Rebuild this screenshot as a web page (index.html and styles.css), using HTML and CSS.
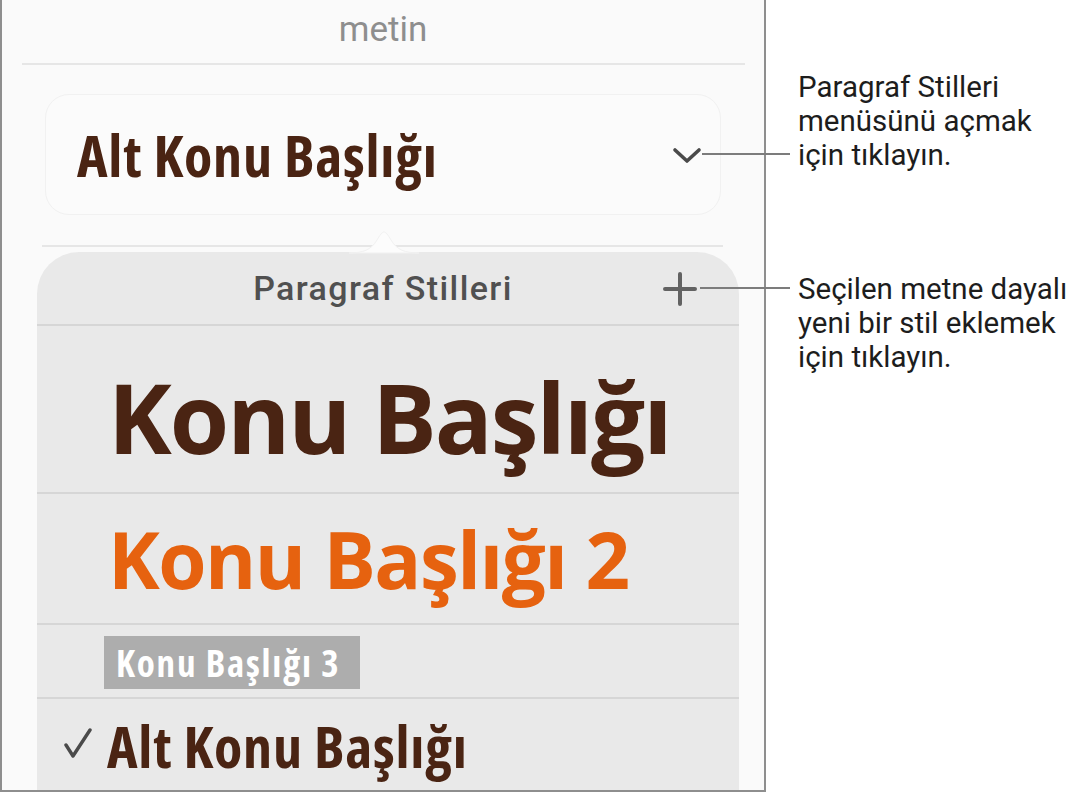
FILE: index.html
```html
<!DOCTYPE html>
<html lang="tr">

<head>
    <meta charset="UTF-8">
    <meta name="viewport" content="width=device-width, initial-scale=1.0">
    <title>Paragraf Stilleri</title>
    <link rel="stylesheet" href="styles.css">
</head>

<body>

    <div class="page">
        <!-- Format panel with the style menu open -->
        <div class="panel">
            <div class="panel-title">metin</div>
            <div class="rule"></div>

            <div class="style-card">
                <span class="style-name sub-head">Alt Konu Başlığı</span>
                <svg class="chevron" width="30" height="18" viewBox="0 0 30 18">
                    <path d="M3 3 L15 14 L27 3" fill="none" stroke="#4a4a4a" stroke-width="3.6" stroke-linecap="round" stroke-linejoin="round" />
                </svg>
            </div>

            <div class="rule rule-lower">
                <svg class="pop-arrow" width="70" height="28" viewBox="0 0 70 28">
                    <path d="M0 27 C14 27 22 24 28 14 C31 9 33 6 35 6 C37 6 39 9 42 14 C48 24 56 27 70 27 Z" fill="#fcfcfc" stroke="#f1f1f1" stroke-width="1" />
                </svg>
            </div>

            <div class="popover">
                <div class="pop-head">
                    <span>Paragraf Stilleri</span>
                    <svg class="plus" width="36" height="36" viewBox="0 0 36 36">
                        <path d="M18 3 V33 M3 18 H33" stroke="#626262" stroke-width="4" stroke-linecap="round" />
                    </svg>
                </div>
                <ul class="style-list">
                    <li class="style-row row-title"><span class="style-name title-head">Konu Başlığı</span></li>
                    <li class="style-row row-title2"><span class="style-name title-head2">Konu Başlığı 2</span></li>
                    <li class="style-row row-title3"><span class="style-name title-head3">Konu Başlığı 3</span></li>
                    <li class="style-row row-current">
                        <svg class="check" width="30" height="30" viewBox="0 0 30 30">
                            <path d="M3 17 L10 28 L27 2" fill="none" stroke="#4a4a4a" stroke-width="3.4" stroke-linecap="round" stroke-linejoin="round" />
                        </svg>
                        <span class="style-name sub-head">Alt Konu Başlığı</span>
                    </li>
                </ul>
            </div>
        </div>

        <!-- Callouts -->
        <div class="notes">
            <p class="note note-menu">
                Paragraf Stilleri<br>
                menüsünü açmak<br>
                <span class="lead lead-menu">için tıklayın.</span>
            </p>
            <p class="note note-add">
                <span class="lead lead-add">Seçilen metne dayalı</span><br>
                yeni bir stil eklemek<br>
                için tıklayın.
            </p>
        </div>
    </div>

</body>

</html>
```

FILE: styles.css
```css
* {
    box-sizing: border-box;
}

body {
    margin: 0;
    padding: 0;
    background-color: white;
    font-family: 'Roboto', 'Liberation Sans', sans-serif;
}

.page {
    display: flex;
    align-items: flex-start;
}

.panel {
    width: 766px;
    height: 792px;
    flex-shrink: 0;
    background-color: #fafafa;
    border: 2px solid #8e8e8e;
    border-top: none;
    overflow: hidden;
}

.panel-title {
    height: 63px;
    padding-top: 9px;
    text-align: center;
    font-size: 35px;
    color: #8e8e8e;
}

.rule {
    height: 2px;
    margin: 0 19px 0 20px;
    background-color: #e6e6e6;
}

.rule-lower {
    position: relative;
    margin: 0 41px 0 40px;
}

.pop-arrow {
    position: absolute;
    left: 307px;
    bottom: -7px;
}

.style-card {
    display: flex;
    align-items: center;
    justify-content: space-between;
    height: 121px;
    margin: 29px 43px 30px 43px;
    padding: 0 18px 0 31px;
    border: 1px solid #f1f1f1;
    border-radius: 24px;
    background-color: #fbfbfb;
}

.chevron {
    margin-top: 2px;
}

/* Style names, drawn in the document's own fonts */
.style-name {
    font-family: 'Open Sans', 'Liberation Sans', sans-serif;
    font-weight: 700;
    white-space: nowrap;
}

.sub-head {
    font-size: 58px;
    font-stretch: 75%;
    letter-spacing: 0.8px;
    color: #4a2413;
}

.title-head {
    font-size: 96px;
    letter-spacing: -2px;
    color: #4a2413;
}

.title-head2 {
    font-size: 78px;
    letter-spacing: -1.5px;
    color: #e6620f;
}

.title-head3 {
    display: inline-block;
    padding: 0 20px 0 12px;
    font-size: 37px;
    line-height: 53px;
    font-stretch: 75%;
    letter-spacing: 1.8px;
    color: white;
    background-color: #adadad;
}

.popover {
    margin: 5px 25px 0 35px;
    height: 560px;
    background-color: #e9e9e9;
    border-radius: 42px 42px 0 0;
}

.pop-head {
    position: relative;
    height: 74px;
    display: flex;
    align-items: center;
    justify-content: center;
    padding-right: 10px;
    border-bottom: 2px solid #d6d6d6;
    font-size: 34px;
    font-weight: 500;
    letter-spacing: 1.4px;
    color: #505050;
}

.plus {
    position: absolute;
    right: 41px;
    top: 19px;
}

.style-list {
    list-style: none;
    margin: 0;
    padding: 0;
}

.style-row {
    display: flex;
    align-items: center;
    padding-left: 71px;
    border-bottom: 2px solid #d6d6d6;
}

.row-title {
    height: 168px;
    padding-top: 14px;
}

.row-title2 {
    height: 131px;
    padding-top: 0;
}

.row-title3 {
    height: 74px;
    padding-left: 67px;
    padding-top: 2px;
}

.row-current {
    height: 100px;
    padding-left: 27px;
    align-items: flex-start;
    padding-top: 7px;
}

.check {
    margin: 22px 14px 0 -1px;
}

.notes {
    margin-left: 32px;
    padding-top: 70px;
}

.note {
    margin: 0;
    font-size: 29.5px;
    line-height: 34px;
    color: #1d1d1d;
}

.note-add {
    margin-top: 100px;
}

.lead {
    position: relative;
}

/* leader line from the text back to the control */
.lead::before {
    content: '';
    position: absolute;
    top: 50%;
    right: 100%;
    height: 2px;
    margin-right: 8px;
    background-color: #7c7c7c;
}

.lead-menu::before {
    width: 88px;
    margin-top: -2px;
}

.lead-add::before {
    width: 90px;
    margin-top: -2px;
}
```
